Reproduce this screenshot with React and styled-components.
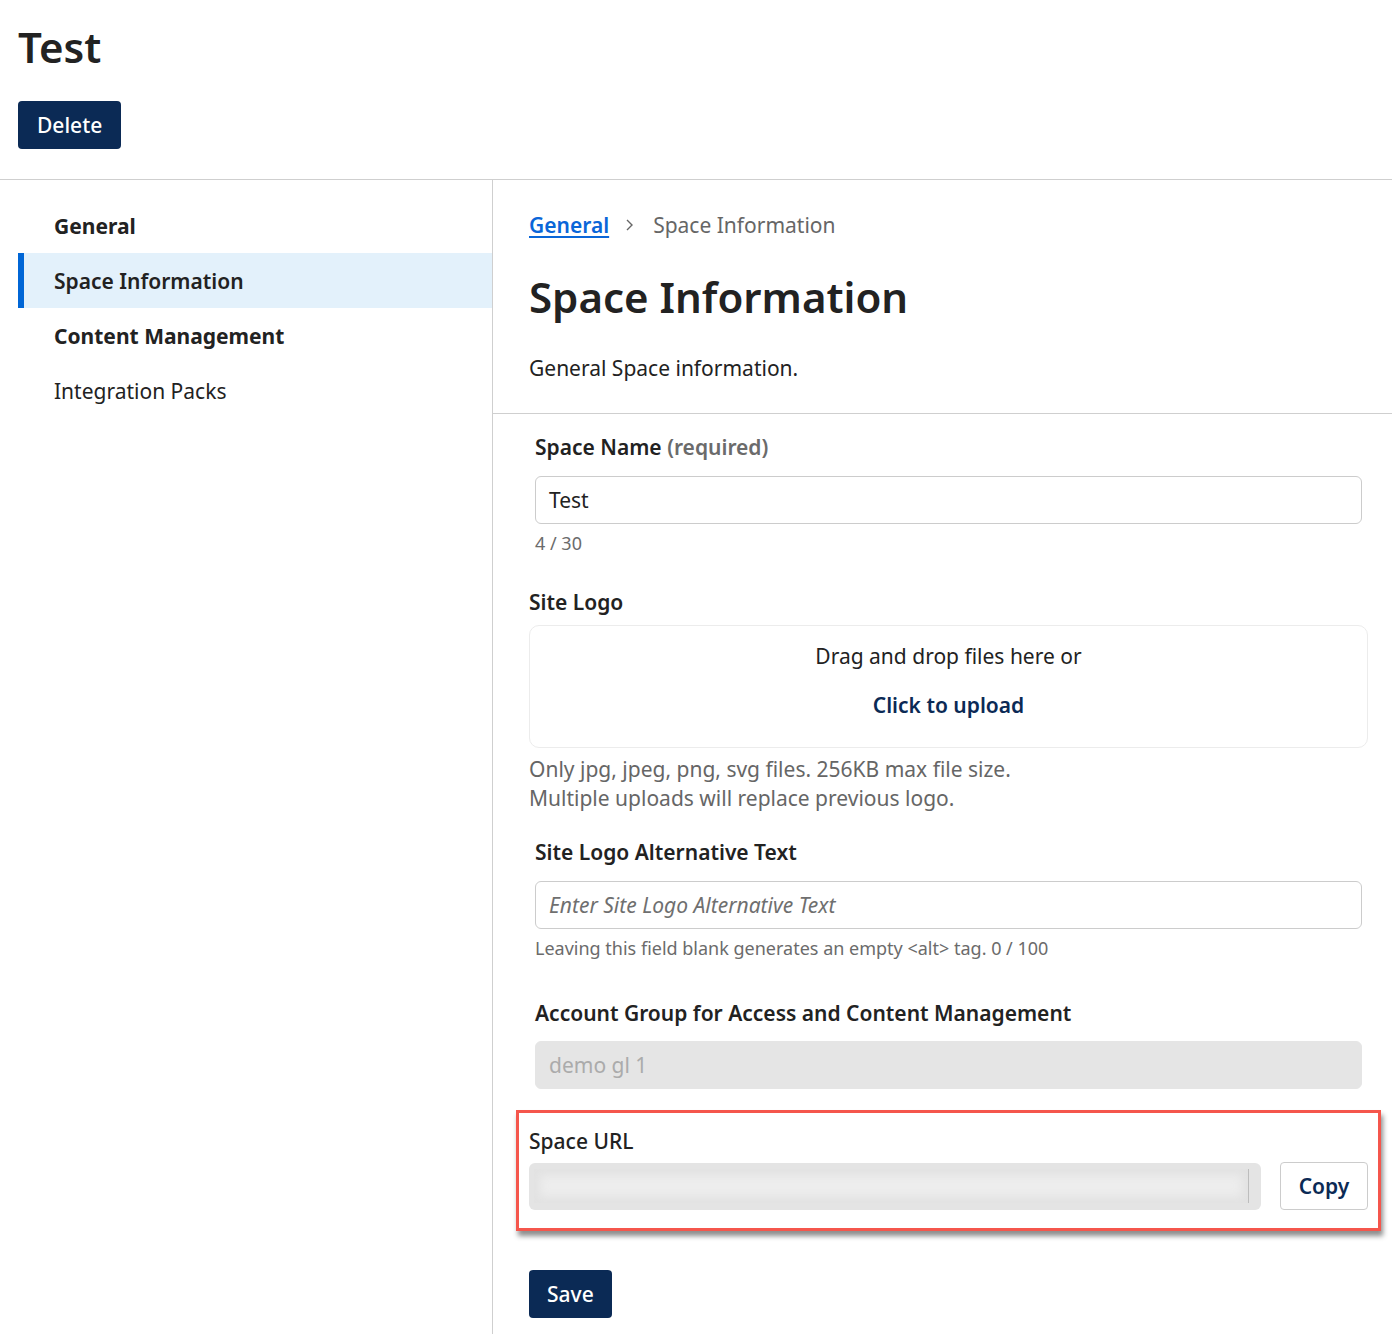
import React from "react";
import styled, { createGlobalStyle } from "styled-components";

const Global = createGlobalStyle`
  html, body { margin: 0; padding: 0; background: #fff; }
  body { font-family: "Noto Sans", "Open Sans", sans-serif; color: #222; }
  * { box-sizing: border-box; }
`;

const NAVY = "#0b2a55";

const Page = styled.div`
  width: 1392px;
  min-height: 1334px;
  display: flex;
  flex-direction: column;
`;

const Header = styled.header`
  padding: 19px 18px 30px;
  border-bottom: 1px solid #cfcfcf;
`;

const Title = styled.h1`
  margin: 0 0 27px;
  font-size: 42px;
  line-height: 55px;
  font-weight: 600;
  color: #222;
`;

const PrimaryButton = styled.button`
  height: 48px;
  padding: 0 ${(p) => p.$px || 19}px;
  border: none;
  border-radius: 4px;
  background: ${NAVY};
  color: #fff;
  font-family: inherit;
  font-size: 21px;
  font-weight: 500;
  cursor: pointer;
`;

const Body = styled.div`
  flex: 1;
  display: flex;
`;

const Sidebar = styled.nav`
  width: 493px;
  flex: none;
  border-right: 1px solid #cfcfcf;
  padding: 18px 0 0 18px;
`;

const NavItem = styled.div`
  height: 55px;
  display: flex;
  align-items: center;
  padding-left: ${(p) => (p.$active ? "30px" : "36px")};
  font-size: 21px;
  font-weight: ${(p) => p.$weight};
  color: #222;
  background: ${(p) => (p.$active ? "#e3f1fb" : "transparent")};
  border-left: ${(p) => (p.$active ? "6px solid #0066d6" : "none")};
`;

const Main = styled.main`
  flex: 1;
  min-width: 0;
`;

const IntroWrap = styled.div`
  padding: 28px 36px 30px;
  border-bottom: 1px solid #cfcfcf;
`;

const Crumbs = styled.div`
  display: flex;
  align-items: center;
  gap: 15px;
  font-size: 21px;
  line-height: 34px;
`;

const CrumbLink = styled.a`
  color: #0a66d8;
  font-weight: 600;
  text-decoration: underline;
  text-underline-offset: 3px;
  text-decoration-thickness: 2px;
`;

const CrumbCurrent = styled.span`
  color: #666;
  margin-left: 2px;
`;

const PageHeading = styled.h2`
  margin: 25px 0 0;
  font-size: 42px;
  line-height: 60px;
  font-weight: 600;
  color: #222;
`;

const Lead = styled.p`
  margin: 26px 0 0;
  font-size: 21px;
  line-height: 30px;
  color: #222;
`;

const Form = styled.div`
  padding: 18px 24px 0 36px;
  display: flex;
  flex-direction: column;
`;

const Field = styled.div`
  display: flex;
  flex-direction: column;
  padding-left: ${(p) => (p.$inset ? "6px" : "0")};
  padding-right: ${(p) => (p.$inset ? "6px" : "0")};
  margin-top: ${(p) => p.$mt || 0}px;
`;

const Label = styled.label`
  font-size: 21px;
  line-height: 30px;
  font-weight: 600;
  color: #222;
  margin-bottom: ${(p) => p.$mb || 14}px;
`;

const LabelMuted = styled.span`
  color: #6b6b6b;
`;

const TextInput = styled.div`
  height: 48px;
  border: 1px solid #cccccc;
  border-radius: 6px;
  display: flex;
  align-items: center;
  padding: 0 13px;
  font-size: 21px;
  color: ${(p) => (p.$disabled ? "#ababab" : "#222")};
  background: ${(p) => (p.$disabled ? "#e5e5e5" : "#fff")};
  border-color: ${(p) => (p.$disabled ? "#e5e5e5" : "#cccccc")};
`;

const Placeholder = styled.span`
  font-style: italic;
  color: #6f6f6f;
`;

const Hint = styled.div`
  margin-top: ${(p) => p.$mt || 7}px;
  font-size: 18px;
  line-height: 26px;
  color: #6b6b6b;
`;

const Dropzone = styled.div`
  height: 123px;
  border: 1px solid #ececec;
  border-radius: 10px;
  display: flex;
  flex-direction: column;
  align-items: center;
  justify-content: center;
  gap: 19px;
  padding-bottom: 12px;
  font-size: 21px;
  line-height: 30px;
`;

const UploadLink = styled.span`
  color: ${NAVY};
  font-weight: 600;
`;

const HelpText = styled.div`
  margin-top: 7px;
  font-size: 21px;
  line-height: 29px;
  color: #666;
`;

const Highlight = styled.div`
  margin: 21px -13px 0 -13px;
  border: 3px solid #f5564c;
  box-shadow: 2px 5px 5px rgba(0, 0, 0, 0.45);
  padding: 13px 10px 18px 10px;
`;

const UrlLabel = styled.div`
  font-size: 21px;
  line-height: 30px;
  font-weight: 500;
  color: #222;
  margin-bottom: 6px;
`;

const UrlRow = styled.div`
  display: flex;
  align-items: center;
  gap: 19px;
`;

const UrlField = styled.div`
  flex: 1;
  height: 47px;
  background: #e4e4e4;
  border-radius: 6px;
  display: flex;
  align-items: center;
  padding: 0 12px 0 5px;
`;

const Blurred = styled.div`
  flex: 1;
  height: 34px;
  background: #ededed;
  box-shadow: inset 0 0 10px 6px #e2e2e2;
  border-right: 1px solid #bdbdbd;
`;

const CopyButton = styled.button`
  width: 88px;
  height: 48px;
  background: #fff;
  border: 1px solid #cccccc;
  border-radius: 4px;
  font-family: inherit;
  font-size: 21px;
  font-weight: 600;
  color: ${NAVY};
`;

const Actions = styled.div`
  margin-top: 39px;
  padding-bottom: 15px;
`;

function IntroBlock() {
  return (
    <IntroWrap>
      <Crumbs>
        <CrumbLink href="#">General</CrumbLink>
        <svg width="12" height="14" viewBox="0 0 12 14" fill="none">
          <path d="M3 2l5 5-5 5" stroke="#666" strokeWidth="1.4" />
        </svg>
        <CrumbCurrent>Space Information</CrumbCurrent>
      </Crumbs>
      <PageHeading>Space Information</PageHeading>
      <Lead>General Space information.</Lead>
    </IntroWrap>
  );
}

export default function App() {
  return (
    <>
      <Global />
      <Page>
        <Header>
          <Title>Test</Title>
          <PrimaryButton>Delete</PrimaryButton>
        </Header>
        <Body>
          <Sidebar>
            <NavItem $weight={700}>General</NavItem>
            <NavItem $active $weight={600}>Space Information</NavItem>
            <NavItem $weight={700}>Content Management</NavItem>
            <NavItem $weight={400}>Integration Packs</NavItem>
          </Sidebar>
          <Main>
            <IntroBlock />
            <Form>
              <Field $inset>
                <Label>
                  Space Name <LabelMuted>(required)</LabelMuted>
                </Label>
                <TextInput>Test</TextInput>
                <Hint $mt={6}>4 / 30</Hint>
              </Field>

              <Field $mt={31}>
                <Label $mb={8}>Site Logo</Label>
                <Dropzone>
                  <span>Drag and drop files here or</span>
                  <UploadLink>Click to upload</UploadLink>
                </Dropzone>
                <HelpText>
                  Only jpg, jpeg, png, svg files. 256KB max file size.
                  <br />
                  Multiple uploads will replace previous logo.
                </HelpText>
              </Field>

              <Field $inset $mt={24}>
                <Label>Site Logo Alternative Text</Label>
                <TextInput>
                  <Placeholder>Enter Site Logo Alternative Text</Placeholder>
                </TextInput>
                <Hint $mt={6}>
                  Leaving this field blank generates an empty &lt;alt&gt; tag. 0 / 100
                </Hint>
              </Field>

              <Field $inset $mt={37}>
                <Label $mb={13}>Account Group for Access and Content Management</Label>
                <TextInput $disabled>demo gl 1</TextInput>
              </Field>

              <Highlight>
                <UrlLabel>Space URL</UrlLabel>
                <UrlRow>
                  <UrlField>
                    <Blurred />
                  </UrlField>
                  <CopyButton>Copy</CopyButton>
                </UrlRow>
              </Highlight>

              <Actions>
                <PrimaryButton $px={18}>Save</PrimaryButton>
              </Actions>
            </Form>
          </Main>
        </Body>
      </Page>
    </>
  );
}
